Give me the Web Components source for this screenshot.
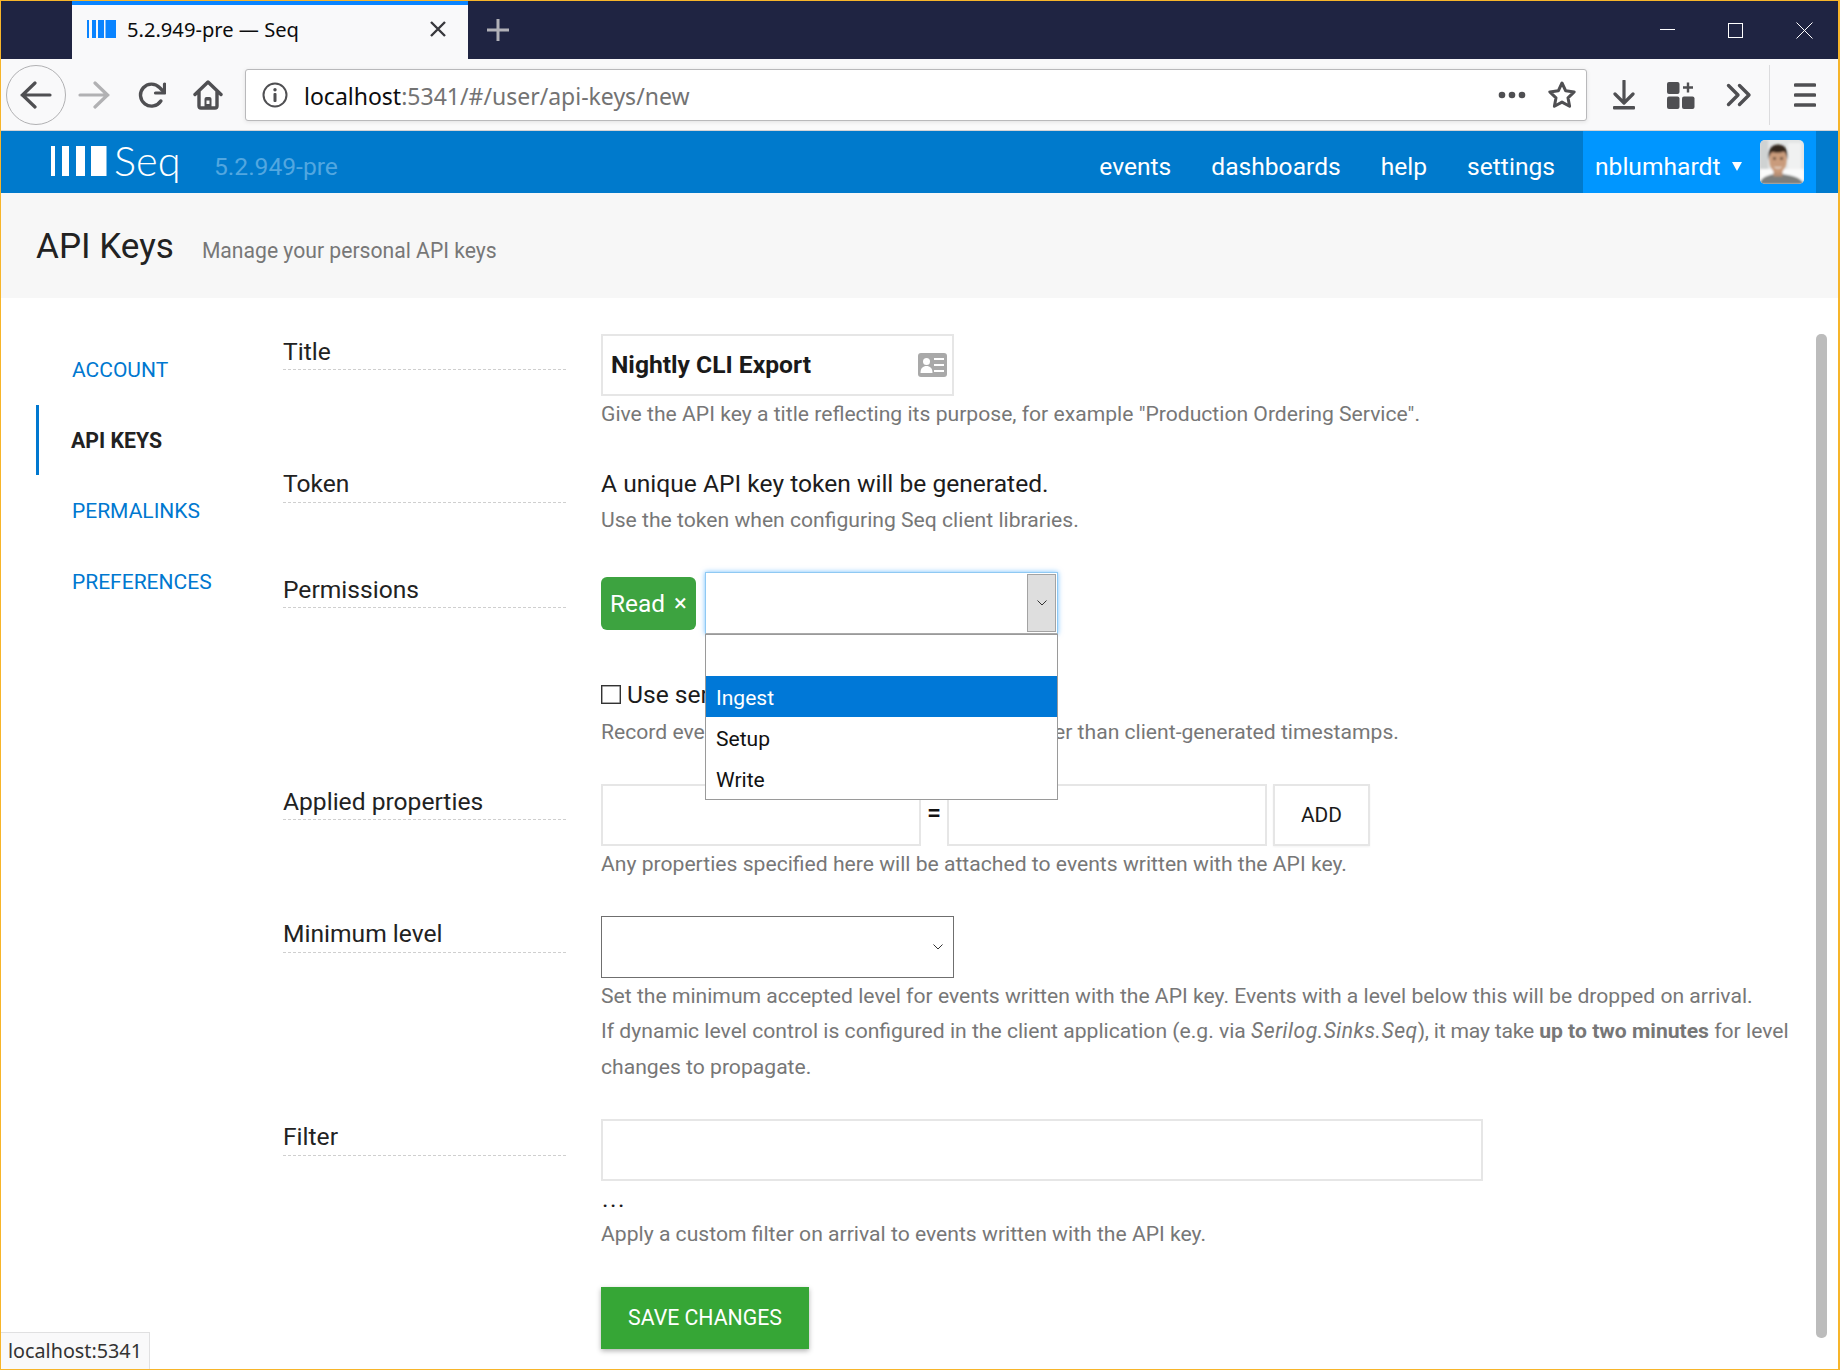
<!doctype html>
<html lang="en"><head><meta charset="utf-8"><title>5.2.949-pre — Seq</title>
<style>html,body{margin:0;padding:0;background:#fff}body{font-family:Roboto,"Liberation Sans",sans-serif}</style>
</head><body>
<seq-window>
  <tab-strip></tab-strip>
  <nav-toolbar></nav-toolbar>
  <seq-topbar></seq-topbar>
  <page-heading heading="API Keys" sub="Manage your personal API keys"></page-heading>
  <seq-main>
    <side-nav>
      <nav-item>ACCOUNT</nav-item>
      <nav-item active>API KEYS</nav-item>
      <nav-item>PERMALINKS</nav-item>
      <nav-item>PREFERENCES</nav-item>
    </side-nav>
    <form-grid>
      <form-row label="Title">
        <text-field value="Nightly CLI Export" style="width:353px" card></text-field>
        <field-hint>Give the API key a title reflecting its purpose, for example "Production Ordering Service".</field-hint>
      </form-row>
      <form-row label="Token" style="--label-h:36px;--row-gap:35px">
        <plain-line>A unique API key token will be generated.</plain-line>
        <field-hint style="margin-top:1px">Use the token when configuring Seq client libraries.</field-hint>
      </form-row>
      <form-row label="Permissions" style="--row-gap:43px">
        <perm-picker></perm-picker>
      </form-row>
      <form-row>
        <check-line>Use server timestamps</check-line>
        <field-hint style="margin-top:2px">Record events with the server's arrival times rather than client-generated timestamps.</field-hint>
      </form-row>
      <form-row label="Applied properties">
        <prop-adder></prop-adder>
        <field-hint>Any properties specified here will be attached to events written with the API key.</field-hint>
      </form-row>
      <form-row label="Minimum level" style="--label-h:36px;--row-gap:35.100px">
        <level-select></level-select>
        <field-hint style="line-height:35.300px">Set the minimum accepted level for events written with the API key. Events with a level below this will be dropped on arrival.<br>If dynamic level control is configured in the client application (e.g. via <em style="letter-spacing:.5px">Serilog.Sinks.Seq</em><span style="letter-spacing:-.2px">), it may take </span><strong>up to two minutes</strong> for level<br>changes to propagate.</field-hint>
      </form-row>
      <form-row label="Filter" style="--label-h:36px;--row-gap:36px">
        <text-field style="width:882px"></text-field>
        <plain-line style="letter-spacing:1.500px;padding-left:1px">...</plain-line>
        <field-hint>Apply a custom filter on arrival to events written with the API key.</field-hint>
      </form-row>
      <form-row>
        <save-button>SAVE CHANGES</save-button>
      </form-row>
    </form-grid>
    <fake-scrollbar></fake-scrollbar>
  </seq-main>
  <status-tip>localhost:5341</status-tip>
</seq-window>
<script>
function def(name, css, html){
  customElements.define(name, class extends HTMLElement{
    constructor(){ super();
      const a=n=>this.getAttribute(n)||'';
      const h=typeof html==='function'?html(a):html;
      this.attachShadow({mode:'open'}).innerHTML='<style>'+css+'</style>'+h;
    }
  });
}
const UI='"Noto Sans","Open Sans",sans-serif';
const ICON='#4f4f52';

def('seq-window',`:host{display:flex;flex-direction:column;box-sizing:border-box;width:1840px;height:1370px;overflow:hidden;position:relative;border:1px solid #f7b52a;border-right-width:2px;background:#fff;font-family:Roboto,sans-serif}`,`<slot></slot>`);

def('tab-strip',`:host{display:flex;height:58px;background:#1f2442;flex:none;position:relative}
.tab{margin-left:71px;width:396px;box-sizing:border-box;background:#f9f9fa;border-top:4px solid #0a84ff;display:flex;align-items:center;padding-left:15px;font:20.150px/1 ${UI};color:#0c0c0d}
.fav{flex:none;margin-top:-6px;margin-right:11px}
.t{flex:1;margin-top:-5px;white-space:nowrap}
.x{margin-right:21px;margin-top:-6px}
.plus{margin:17px 0 0 18px}
.win{margin-left:auto;display:flex;align-items:flex-start;margin-right:25px}`,
`<div class="tab">
<svg class="fav" width="29" height="18" viewBox="0 0 29 18"><path fill="#0a84ff" d="M0 0h2v18H0zM5 0h4v18H5zM11 0h6v18h-6zM18.500 0H29v18H18.500z"/></svg>
<span class="t">5.2.949-pre — Seq</span>
<svg class="x" width="18" height="18" viewBox="0 0 18 18"><path d="M2 2l14 14M16 2L2 16" stroke="#38383d" stroke-width="2.400" fill="none"/></svg>
</div>
<svg class="plus" width="24" height="24" viewBox="0 0 24 24"><path d="M12 1v22M1 12h22" stroke="#b1b1b8" stroke-width="3" fill="none"/></svg>
<div class="win">
<svg width="16" height="58" viewBox="0 0 16 58"><path d="M0 28.500h15" stroke="#fff" stroke-width="1" fill="none"/></svg>
<svg style="margin-left:52px" width="16" height="58" viewBox="0 0 16 58"><rect x=".5" y="22.500" width="14" height="14" stroke="#fff" fill="none"/></svg>
<svg style="margin-left:52px" width="17" height="58" viewBox="0 0 17 58"><path d="M.5 21.500l16 16M16.500 21.500l-16 16" stroke="#fff" fill="none"/></svg>
</div>`);

def('nav-toolbar',`:host{display:flex;align-items:center;height:72px;box-sizing:border-box;background:#f9f9fa;border-bottom:1px solid #d4d4d6;flex:none;position:relative}
.back{width:60px;height:60px;box-sizing:border-box;border:1px solid #b1b1b3;border-radius:50%;margin-left:5px;display:flex;align-items:center;justify-content:center;flex:none}
svg{flex:none;display:block}
.url{margin-left:22px;flex:none;width:1342px;height:52px;box-sizing:border-box;background:#fff;border:1px solid #b9b9bb;border-radius:3px;box-shadow:0 1px 4px rgba(0,0,0,.1);display:flex;align-items:center;font:23px/1 ${UI};color:#737373}
.url b{font-weight:400;color:#0c0c0d}
.u{margin-left:16px;margin-top:3px;white-space:nowrap}
.dots{margin-left:auto}
.sep{width:1px;height:60px;background:#dcdcde;margin-left:17px}`,
`<div class="back"><svg width="32" height="28" viewBox="0 0 32 28"><path d="M2 14h28M15 2L2.500 14 15 26" stroke="${ICON}" stroke-width="3.200" stroke-linecap="round" stroke-linejoin="round" fill="none"/></svg></div>
<svg style="margin-left:12px" width="32" height="28" viewBox="0 0 32 28"><path d="M2 14h28M17 2l12.500 12L17 26" stroke="#b1b1b3" stroke-width="3.200" stroke-linecap="round" stroke-linejoin="round" fill="none"/></svg>
<svg style="margin-left:28px" width="28" height="26" viewBox="0 0 28 26"><path d="M22.800 19A11 11 0 1 1 21.500 5.500L26 10" stroke="${ICON}" stroke-width="3.400" stroke-linecap="round" stroke-linejoin="round" fill="none"/><path d="M26.500 2v9H17.500" stroke="${ICON}" stroke-width="3.200" stroke-linecap="round" stroke-linejoin="round" fill="none"/></svg>
<svg style="margin-left:27px" width="30" height="30" viewBox="0 0 30 30"><path d="M2 14.500L15 2l13 12.500M6 11.500V26a2 2 0 0 0 2 2h14a2 2 0 0 0 2-2V11.500" stroke="${ICON}" stroke-width="3.400" stroke-linecap="round" stroke-linejoin="round" fill="none"/><path d="M11.500 27.500V19a2 2 0 0 1 2-2h3a2 2 0 0 1 2 2v8.500z" fill="${ICON}"/><rect x="13.500" y="20.500" width="3" height="3.500" fill="#f9f9fa"/></svg>
<div class="url">
<svg style="margin-left:16px" width="26" height="26" viewBox="0 0 26 26"><circle cx="13" cy="13" r="11.500" stroke="${ICON}" stroke-width="2" fill="none"/><circle cx="13" cy="7.800" r="1.700" fill="${ICON}"/><rect x="11.500" y="11" width="3" height="9" rx="1" fill="${ICON}"/></svg>
<span class="u"><b>localhost</b>:5341/#/user/api-keys/new</span>
<svg class="dots" width="28" height="8" viewBox="0 0 28 8"><circle cx="4" cy="4" r="3.300" fill="${ICON}"/><circle cx="14" cy="4" r="3.300" fill="${ICON}"/><circle cx="24" cy="4" r="3.300" fill="${ICON}"/></svg>
<svg style="margin:0 9px 0 21px" width="30" height="30" viewBox="0 0 30 30"><path d="M15 3l3.700 7.800 8.500 1.100-6.200 5.900 1.600 8.400L15 22.100l-7.600 4.100L9 17.800 2.800 11.900l8.500-1.100z" stroke="${ICON}" stroke-width="3" stroke-linejoin="round" fill="none"/></svg>
</div>
<svg style="margin-left:25px" width="24" height="30" viewBox="0 0 24 30"><path d="M12 1v21M3 14l9 9 9-9" stroke="${ICON}" stroke-width="3.200" stroke-linecap="round" stroke-linejoin="round" fill="none"/><rect x="1" y="26" width="22" height="3.500" rx="1" fill="${ICON}"/></svg>
<svg style="margin-left:31px" width="28" height="28" viewBox="0 0 28 28"><rect x="0" y="1" width="12.500" height="12" rx="2" fill="${ICON}"/><rect x="0" y="15.500" width="12.500" height="12.500" rx="2" fill="${ICON}"/><rect x="15" y="15.500" width="12.500" height="12.500" rx="2" fill="${ICON}"/><path d="M21 1.500v10M16 6.500h10" stroke="${ICON}" stroke-width="2.400" fill="none"/></svg>
<svg style="margin-left:31px" width="26" height="24" viewBox="0 0 26 24"><path d="M2.500 2.500L12 12l-9.500 9.500M13.500 2.500L23 12l-9.500 9.500" stroke="${ICON}" stroke-width="3.400" stroke-linecap="round" stroke-linejoin="round" fill="none"/></svg>
<div class="sep"></div>
<svg style="margin-left:24px" width="22" height="26" viewBox="0 0 22 26"><path d="M1.500 3h19M1.500 13h19M1.500 23h19" stroke="${ICON}" stroke-width="3.600" stroke-linecap="round" fill="none"/></svg>`);

def('seq-topbar',`:host{display:flex;height:62px;background:#007acc;flex:none;color:#fff;font-family:Roboto,sans-serif;font-size:24.600px;align-items:stretch}
.logo{margin-left:50px;margin-top:15px;flex:none}
.seq{margin-left:7px;width:66px;font:300 41.500px/48px Lato,sans-serif;padding-top:5px;color:#fff;flex:none}
.ver{margin-left:34px;padding-top:9px;line-height:53px;color:#52a7e0}
nav{margin-left:auto;display:flex;gap:40px;padding-top:9px;line-height:53px;margin-right:28px}
.user{flex:none;width:233px;box-sizing:border-box;background:#0096ff;padding:9px 0 0 12px;line-height:53px;display:flex;margin-right:22px;position:relative}
.car{margin:22px 0 0 12px;flex:none}
.av{position:absolute;left:177px;top:9px;display:block}`,
`<svg class="logo" width="56" height="30" viewBox="0 0 56 30"><path fill="#fff" d="M0 0h4v30H0zM11 0h7v30h-7zM25 0h9v30h-9zM40 0h15.500v30H40z"/></svg>
<span class="seq">Seq</span><span class="ver">5.2.949-pre</span>
<nav><span>events</span><span>dashboards</span><span>help</span><span>settings</span></nav>
<div class="user"><span>nblumhardt</span>
<svg class="car" width="10" height="9" viewBox="0 0 10 9"><path d="M0 0h10L5 9z" fill="#fff"/></svg>
<svg class="av" width="44" height="44" viewBox="0 0 44 44"><defs><clipPath id="c"><rect width="44" height="44" rx="5"/></clipPath><filter id="b" x="-10%" y="-10%" width="120%" height="120%"><feGaussianBlur stdDeviation=".9"/></filter></defs><g clip-path="url(#c)"><rect width="44" height="44" fill="#e3e5e5"/><g filter="url(#b)"><rect x="0" y="0" width="8" height="32" fill="#cfd2d2"/><rect x="28" y="3" width="13" height="28" fill="#f0f1f1"/><rect x="0" y="29" width="44" height="15" fill="#fbfbfb"/><path d="M0 44c1-7 7-9 18-10.500 11 1.500 23 3 26 10.500z" fill="#7d7e7c"/><path d="M13.500 28h9v8.500h-9z" fill="#b98f73"/><ellipse cx="18" cy="19.500" rx="8.800" ry="13.500" fill="#c99b7b"/><path d="M8.500 20c-1.500-10 3-15.500 9.500-15.500S29 9.500 27.500 20c-.8-4.500-1.500-7-3.500-8.500-4 1.500-8 1.500-12 .5-2 2-3 4.500-3.500 8z" fill="#33261f"/><path d="M13.500 26.500c2 2.500 7 2.500 9 0-2 1-7 1-9 0z" fill="#f2ece6"/><circle cx="14.500" cy="18.500" r="1.200" fill="#33261f"/><circle cx="21.500" cy="18.500" r="1.200" fill="#33261f"/></g></g></svg>
</div>`);

def('page-heading',`:host{display:flex;align-items:baseline;height:105px;box-sizing:border-box;padding:33px 0 0 35px;background:#f7f7f7;flex:none;font-family:Roboto,sans-serif}
h1{margin:0;font-weight:400;font-size:35.100px;line-height:41px;color:#222}
span{margin-left:28px;font-size:21.150px;color:#777}`,
a=>`<h1>${a('heading')}</h1><span>${a('sub')}</span>`);

def('seq-main',`:host{display:flex;flex:1;min-height:0;padding-top:36px;box-sizing:border-box;position:relative;background:#fff;align-items:flex-start}`,`<slot></slot>`);

def('side-nav',`:host{display:block;flex:none;width:247px;margin-left:35px;box-sizing:border-box}`,`<slot></slot>`);
customElements.define('nav-item',class extends HTMLElement{constructor(){super();
  const on=this.hasAttribute('active');
  this.attachShadow({mode:'open'}).innerHTML=`<style>:host{display:block;height:70.670px;box-sizing:border-box;border-left:3px solid ${on?'#0078d0':'transparent'};padding-left:${on?32:33}px;line-height:72.500px;font-size:${on?'21.250px':'21px'};font-weight:${on?700:400};color:${on?'#222':'#0078d0'};font-family:Roboto,sans-serif}</style><slot></slot>`;}});

def('form-grid',`:host{display:block;flex:1;min-width:0}`,`<slot></slot>`);
customElements.define('form-row',class extends HTMLElement{constructor(){super();
  const l=this.getAttribute('label');
  this.attachShadow({mode:'open'}).innerHTML=`<style>:host{display:grid;grid-template-columns:283px 1fr;column-gap:35px;margin-bottom:var(--row-gap,35px);font-family:Roboto,sans-serif}
  .l{height:var(--label-h,35px);line-height:35px;font-size:24.600px;color:#222;box-sizing:content-box}.l.on{border-bottom:1px dashed #cfcfcf}
  .c{min-width:0}</style><div class="l ${l?'on':''}">${l||''}</div><div class="c"><slot></slot></div>`;}});

def('field-hint',`:host{display:block;font-size:21.130px;line-height:35px;color:#777;white-space:nowrap}
::slotted(strong){font-weight:700}`,`<slot></slot>`);
def('plain-line',`:host{display:block;font-size:24.600px;line-height:35px;color:#1c1c1c;white-space:nowrap}`,`<slot></slot>`);

customElements.define('text-field',class extends HTMLElement{constructor(){super();
  const v=this.getAttribute('value')||'';const card=this.hasAttribute('card');
  this.attachShadow({mode:'open'}).innerHTML=`<style>:host{display:flex;align-items:center;box-sizing:border-box;height:62px;border:2px solid #e6e6e6;background:#fff;padding-left:8px;font-weight:700;font-size:24.630px;color:#1a1a1a;justify-content:space-between}
  span{margin-top:-2px}svg{margin-right:5px;display:block}</style><span>${v}</span>${card?`<svg width="29" height="24" viewBox="0 0 29 24"><rect width="29" height="24" rx="3" fill="#a9a9a9"/><circle cx="8.500" cy="8.500" r="3.500" fill="#fff"/><path d="M2.500 20c0-5 2.500-7 6-7s6 2 6 7z" fill="#fff"/><path d="M16 6h10M16 12h10M16 18h10" stroke="#fff" stroke-width="2.200" fill="none"/></svg>`:''}`;}});

const CHEV='<svg width="10" height="6" viewBox="0 0 10 6"><path d="M.5.500L5 5 9.500.500" stroke="#333" stroke-width="1" fill="none"/></svg>';

def('perm-picker',`:host{display:flex;align-items:flex-start;position:relative;height:62px}
.chip{margin-top:5px;width:95px;height:53px;box-sizing:border-box;background:#3da340;border-radius:6px;color:#fff;font-size:24.400px;line-height:53px;padding-left:9px;display:flex}
.chip i{font-style:normal;font-size:24px;margin-left:9px}
.sel{margin-left:9px;width:353px;height:62px;box-sizing:border-box;border:1px solid #8fc9f3;box-shadow:0 0 5px rgba(0,140,255,.55);background:#fff;display:flex;justify-content:flex-end;padding:1px;border-bottom-color:#aaa}
.btn{width:29px;box-sizing:border-box;background:#dedede;border:1px solid #a3a3a3;display:flex;align-items:center;justify-content:center}
.menu{position:absolute;left:104px;top:62px;width:353px;height:166px;box-sizing:border-box;border:1px solid #9a9a9a;background:#fff;z-index:5;font-size:21.060px;color:#111}
.o{height:41px;line-height:44.600px;padding-left:10px}.o.first{height:40.500px}
.o.on{background:#0078d7;color:#fff}`,
`<div class="chip"><span>Read</span><i>×</i></div>
<div class="sel"><div class="btn">${CHEV}</div></div>
<div class="menu"><div class="o first"></div><div class="o on">Ingest</div><div class="o">Setup</div><div class="o">Write</div></div>`);

def('check-line',`:host{display:flex;align-items:center;height:35px;font-size:24.600px;color:#1c1c1c;white-space:nowrap}
.b{width:20px;height:19px;box-sizing:border-box;border:1px solid #333;background:#fff;margin:0 6px 0 0;flex:none;box-shadow:inset 0 0 0 .5px #555}`,`<div class="b"></div><slot></slot>`);

def('prop-adder',`:host{display:flex;height:62px;align-items:stretch}
.i{box-sizing:border-box;border:2px solid #e6e6e6;background:#fff;width:320px}
.e{width:26px;text-align:center;line-height:60px;font-size:25px;font-weight:500;color:#111}
.a{margin-left:6px;width:97px;box-sizing:border-box;border:2px solid #e6e6e6;box-shadow:0 1px 2px rgba(0,0,0,.05);text-align:center;line-height:58px;font-size:20.900px;color:#1a1a1a;height:62px}`,
`<div class="i"></div><div class="e">=</div><div class="i"></div><div class="a">ADD</div>`);

def('level-select',`:host{display:flex;align-items:center;justify-content:flex-end;width:353px;height:62px;box-sizing:border-box;border:1px solid #6f6f6f;background:#fff;padding-right:10px}`,CHEV);

def('save-button',`:host{display:block;width:208px;height:62px;background:#36a636;color:#fff;font-size:21.270px;line-height:62px;text-align:center;box-shadow:0 2px 5px rgba(0,0,0,.3)}`,`<slot></slot>`);

def('fake-scrollbar',`:host{position:absolute;left:1815px;top:36px;width:11px;height:1004px;background:#bcbcbc;border-radius:5px}`,``);

def('status-tip',`:host{position:absolute;left:0;bottom:0;box-sizing:border-box;width:149px;height:37px;background:#f9f9fa;border-top:1px solid #e0e0e1;border-right:1px solid #e0e0e1;font:19.750px/36px ${UI};color:#333;padding-left:7px;white-space:nowrap;z-index:9}`,`<slot></slot>`);
</script>
</body></html>
